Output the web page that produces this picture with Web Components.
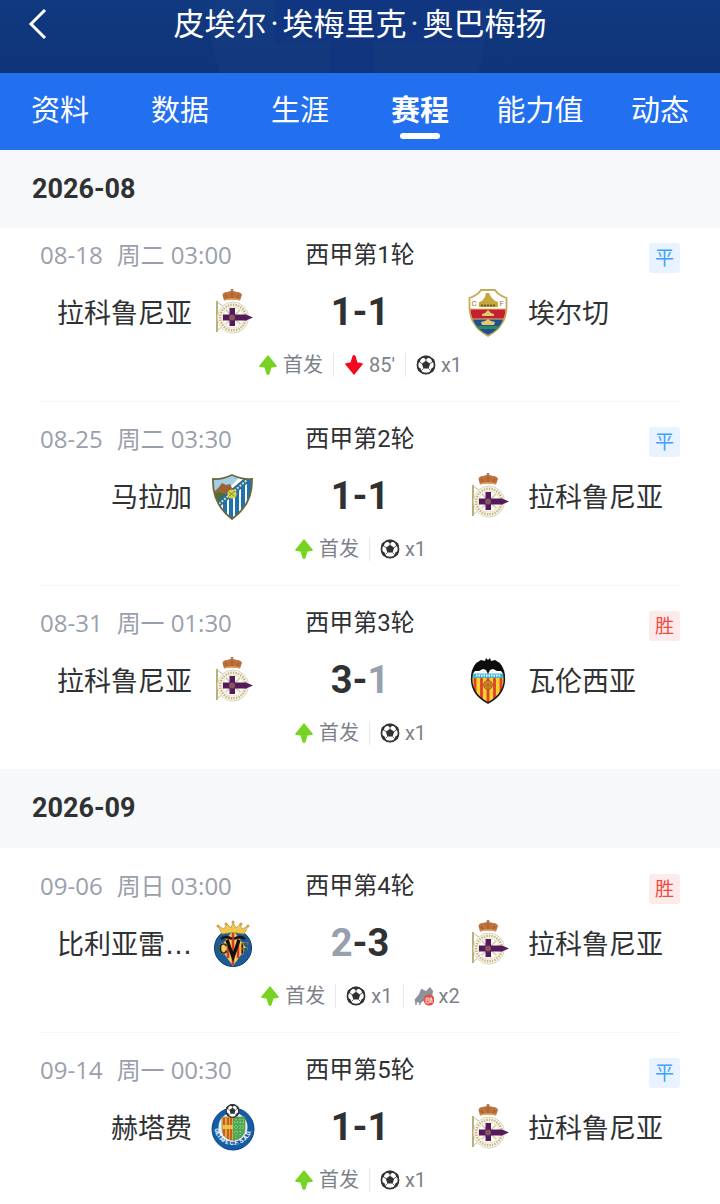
<!DOCTYPE html>
<html lang="zh-CN">
<head>
<meta charset="utf-8">
<meta name="viewport" content="width=device-width, initial-scale=1">
<title>赛程</title>
<style>
  body {
    margin: 0;
    background: #fff;
    color: #303133;
    font-family: Roboto, "Noto Sans CJK SC", sans-serif;
  }
</style>
</head>
<body>
<player-page>
  <player-header slot="header">皮埃尔<span>·</span>埃梅里克<span>·</span>奥巴梅扬</player-header>
  <tab-bar slot="tabs">
    <tab-link>资料</tab-link>
    <tab-link>数据</tab-link>
    <tab-link>生涯</tab-link>
    <tab-link active>赛程</tab-link>
    <tab-link>能力值</tab-link>
    <tab-link>动态</tab-link>
  </tab-bar>
  <month-group class="first">
    <span slot="month">2026-08</span>
    <match-row when="08-18 周二 03:00" round="西甲第1轮" result="平" home="拉科鲁尼亚" home-crest="deportivo" away="埃尔切" away-crest="elche" score="1-1" events="on:首发|off:85'|goal:x1"></match-row>
    <match-row when="08-25 周二 03:30" round="西甲第2轮" result="平" home="马拉加" home-crest="malaga" away="拉科鲁尼亚" away-crest="deportivo" score="1-1" events="on:首发|goal:x1"></match-row>
    <match-row when="08-31 周一 01:30" round="西甲第3轮" result="胜" home="拉科鲁尼亚" home-crest="deportivo" away="瓦伦西亚" away-crest="valencia" score="3-1" events="on:首发|goal:x1"></match-row>
  </month-group>
  <month-group class="last">
    <span slot="month">2026-09</span>
    <match-row when="09-06 周日 03:00" round="西甲第4轮" result="胜" home="比利亚雷…" home-crest="villarreal" away="拉科鲁尼亚" away-crest="deportivo" score="2-3" events="on:首发|goal:x1|assist:x2"></match-row>
    <match-row when="09-14 周一 00:30" round="西甲第5轮" result="平" home="赫塔费" home-crest="getafe" away="拉科鲁尼亚" away-crest="deportivo" score="1-1" events="on:首发|goal:x1"></match-row>
  </month-group>
</player-page>

<script>
const ball = (cx, cy, r) => `
  <g transform="translate(${cx} ${cy}) scale(${r / 10})">
    <circle r="9" fill="#fff" stroke="#303133" stroke-width="1.8"/>
    <path fill="#303133" d="M0-4.600 4.400-1.400 2.700 3.800H-2.700L-4.400-1.400Z M-4.500-8.600 0-6 4.500-8.600 2-9.800H-2Z M9.600-1.500 6.400-3.200 5.400-7.600 8.500-6Z M9.400 2 6 3.200 4 8.200 7.800 6.600Z M-9.400 2-6 3.200-4 8.200-7.800 6.600Z M-9.600-1.500-6.400-3.200-5.400-7.600-8.500-6Z"/>
    <path stroke="#303133" stroke-width=".8" fill="none" d="M0-4.400V-7M4.200-1.400 7-3.400M2.600 3.600 5 6M-2.600 3.600-5 6M-4.200-1.400-7-3.400"/>
  </g>`;

const CRESTS = {
  deportivo: `
    <path d="M6 14v31" stroke="#a99a62" stroke-width="1.600"/>
    <path d="M6 15 13 20M6 44 13 38" stroke="#c9bd8d" stroke-width="1"/>
    <circle cx="22" cy="30.500" r="15.500" fill="#fbf9ee" stroke="#ddd5b2" stroke-width="1"/>
    <circle cx="22" cy="30.500" r="12.800" fill="none" stroke="#bfb384" stroke-width="2.400" stroke-dasharray="1.400 1.200"/>
    <circle cx="22" cy="30.500" r="10.500" fill="#fffef8" stroke="#ddd5b2" stroke-width=".7"/>
    <path d="m15 23 14 14M29 23 15 37" stroke="#d3cbad" stroke-width="1.600"/>
    <path fill="#561a5c" d="M18.500 21h5.500v6.500H35l7 3-7 3H24V39h-5.500v-5.500H12v-6h6.500Z"/>
    <circle cx="21" cy="30.500" r="3" fill="#855361"/>
    <path fill="#be713a" d="M13 13.500 11.500 8Q12 5 16 5L21 3.800 26 5q4 0 5 3l-2 5.500Q21 11.500 13 13.500Z"/>
    <path d="M21 2v3M19.500 3h3M14 8l2 3M21 6v5M28 8l-2 3" stroke="#9a5a2b" stroke-width="1"/>
    <path d="M13.500 12.800q7.500-2 15 0" stroke="#dda36a" stroke-width="1.200" fill="none"/>`,
  elche: `
    <path d="M14 3h14q3 5 11.500 8V21Q39 39 21 49 3 39 2.500 21V11Q11 8 14 3Z" fill="#fff" stroke="#c8aa59" stroke-width="1.800"/>
    <path d="M3.500 22h35q0 5-2 10h-31q-2-5-2-10Z" fill="#c51f32"/>
    <path d="M5.500 32h31Q32 43 21 48 10 43 5.500 32Z" fill="#1f4f8c"/>
    <path d="M9 39h24l-3 3H12Z" fill="#2d8664"/>
    <path d="M3 22h36M5 32h32" stroke="#d9bb65" stroke-width="1"/>
    <path d="M12 20v-5l3-1 3-4 1-4h3l2 4 4 4 3 1v5Z" fill="#c7a63b"/>
    <path d="M14 18.500h15" stroke="#695b20" stroke-width="2" stroke-dasharray="2 1"/>
    <path d="M15 29h12v-2l-3-1-3-3-3 3-3 1ZM15 38h12l1-3-4-1-3-2-3 2-4 1Z" fill="#e5c96d"/>
    <text x="4.500" y="19" font-size="8" fill="#8f7d47">C</text><text x="32.500" y="19" font-size="8" fill="#8f7d47">F</text>`,
  malaga: `
    <clipPath id="mc"><path d="M2 8Q10 9 21 4q11 5 20 4 1 25-20 40Q1 33 2 8Z"/></clipPath>
    <g clip-path="url(#mc)">
      <path fill="#fff" d="M0 0h42v50H0z"/>
      <path fill="#a3d0e8" d="M0 0h34L3 34Z"/>
      <path fill="#9b6234" d="M3 21 8 16l3-4 4 2 4-1 2 4 5 1-17 14Z"/>
      <path fill="#4c6f35" d="M3 23q6-4 12 1L7 33Z"/>
      <path d="M14 27v20M20 22v28M26 18v32M32 13v30M38 9v30" stroke="#1d72b0" stroke-width="4"/>
      <path d="M5 35 37 8" stroke="#2a6c9c" stroke-width="6"/>
      <path d="M8 33 36 9" stroke="#d5e3b0" stroke-width="2" stroke-dasharray="2 1.400"/>
    </g>
    <circle cx="21" cy="23" r="4.600" fill="#ddd23e"/><path d="m18 25 6-5m-6 1 5 4" stroke="#6d943e"/>
    <path d="M2 8Q10 9 21 4q11 5 20 4 1 25-20 40Q1 33 2 8Z" fill="none" stroke="#6d673e" stroke-width="1.800"/>`,
  valencia: `
    <clipPath id="vc"><path d="M5 19Q12 16 21 17q9-1 16 2Q40 38 21 48 2 38 5 19Z"/></clipPath>
    <g clip-path="url(#vc)">
      <path fill="#f8d030" d="M0 15h42v35H0z"/>
      <path d="M8 22v26M14.500 22v28M21 22v28M27.500 22v28M34 22v26" stroke="#df412c" stroke-width="2.800"/>
      <path fill="#47b4d4" d="M0 15h42v8H0z"/>
    </g>
    <path d="M9 20.500h24" stroke="#e8f8fa" stroke-width="2" stroke-dasharray="1.500 1"/>
    <circle cx="21" cy="30" r="4.500" fill="#d78424" stroke="#985a1b" stroke-width=".8"/><path d="m17 28 8 4m-8 0 8-4M21 26v8" stroke="#a76520" stroke-width=".7"/>
    <path d="M5 19Q2 38 21 48 40 38 37 19" fill="none" stroke="#171717" stroke-width="1.500"/>
    <path d="M7 17.500h28" stroke="#fff" stroke-width="2"/>
    <path fill="#0c0c0c" d="M4 21Q5 9 14 5l4 1 1-3 2 2 2-2 1 3 4-1q9 4 10 16l-4-5-4 0-4-2-3 1-2 4-2-4-3-1-4 2-4 0Z"/>`,
  villarreal: `
    <circle cx="22" cy="30" r="18.600" fill="#1d5a96" stroke="#16436f" stroke-width="1"/>
    <path d="M22 12 35 30 22 48 9 30Z" fill="#f4cf55"/>
    <path d="M17 20v20M22 14v33M27 20v20" stroke="#d3392f" stroke-width="2.600"/>
    <path fill="#f0c94e" stroke="#b8923c" stroke-width=".7" d="M11 16 7 8l6 3 3-5 4 4 2-6 3 6 4-4 2 5 6-3-4 8q-11-3-22 0Z"/>
    <g fill="#dd9a45"><circle cx="7" cy="8" r="1.500"/><circle cx="15" cy="6" r="1.500"/><circle cx="22" cy="4" r="1.500"/><circle cx="30" cy="6" r="1.500"/><circle cx="37" cy="8" r="1.500"/></g>
    <path d="M10 21q5-4 11 0M23 21q6-4 11 0" stroke="#151515" stroke-width="2.400" fill="none"/>
    <path d="M16 22 22 39 28 22" stroke="#111" stroke-width="3.400" fill="none"/>
    <g font-weight="700" fill="#111" stroke="#f1cf5c" stroke-width=".3" text-anchor="middle" font-size="14"><text x="12" y="36">C</text><text x="33" y="36">F</text></g>`,
  getafe: `
    <circle cx="22" cy="27" r="21" fill="#145ba8" stroke="#0e4786" stroke-width="1"/>
    <circle cx="22" cy="25" r="14.500" fill="#e7f1f5"/>
    <path d="M11 15h11v24q-11-3-11-12Z" fill="#d9ac2a"/><path d="M13 16v18M17 16v21M20 16v22" stroke="#cf4830" stroke-width="1.700"/>
    <path d="M11 23h11v4H11Z" fill="#e4c44f"/>
    <path d="M22 15h12v12q0 9-12 12Z" fill="#4ba956"/><path d="M25 17v19M29 17v16M32 17v12M23 20h10M23 25h10M23 30h9" stroke="#a5d898" stroke-width="1" stroke-dasharray="1 2"/>
    <path d="M11 15h23v12q0 9-12 12-11-3-11-12Z" fill="none" stroke="#8d843c" stroke-width=".7"/>
    <path id="ga" d="M3 24a19 19 0 0 0 38 0" fill="none"/>
    <text font-size="6" font-weight="700" fill="#fff"><textPath href="#ga" startOffset="3">GETAFE C.F. S.A.D.</textPath></text>
    ${ball(21.5, 9, 7)}`
};

const ICONS = {
  on: `<path fill="#77d321" d="M10 0 19 11Q19 12 13.500 12.500L11.500 19Q10 21 8.500 19L6.500 12.500Q1 12 1 11Z"/>`,
  off: `<path fill="#f5071d" d="M10 20 19 9Q19 8 13.500 7.500L11.500 1Q10-1 8.500 1L6.500 7.500Q1 8 1 9Z"/>`,
  goal: ball(10, 10, 9.5),
  assist: `
    <path fill="#8b929e" d="M8 3 12 5l4-4 3 4-1 7-5 2-4 1-2 2-6-1q-1-3 1-4 4-4 5-9Z"/>
    <path stroke="#8b929e" stroke-width="1.500" d="M2 16v3M6 16v3"/>
    <circle cx="15" cy="14" r="5.500" fill="#e84b40"/>
    <path d="M12 12h3v5h-3ZM12 14h3M16 13h2v4M17 11v3l-1 3" fill="none" stroke="#fff" stroke-width=".8"/>`
};

function define(name, css, html, setup) {
  const template = document.createElement('template');
  template.innerHTML = `<style>*{box-sizing:border-box}${css}</style>${html}`;
  customElements.define(name, class extends HTMLElement {
    constructor() {
      super();
      this.attachShadow({ mode: 'open' }).append(template.content.cloneNode(true));
    }
    connectedCallback() {
      if (setup) setup(this, this.shadowRoot);
    }
  });
}

define('club-crest',
  `:host{display:block;width:42px;height:50px;flex:none}
   svg{display:block;width:100%;height:100%;overflow:visible}`,
  `<svg viewBox="0 0 42 50" fill="none" aria-hidden="true"></svg>`,
  (el, root) => { root.querySelector('svg').innerHTML = CRESTS[el.getAttribute('club')] || ''; });

define('match-event',
  `:host{display:flex;align-items:center;gap:5px;height:24px;font-size:20px;line-height:24px;color:#7d818a}
   svg{width:20px;height:20px;flex:none}`,
  `<svg viewBox="0 0 20 20" aria-hidden="true"></svg><span><slot></slot></span>`,
  (el, root) => { root.querySelector('svg').innerHTML = ICONS[el.getAttribute('kind')]; });

define('result-tag',
  `:host{display:block;width:31px;height:30px;border-radius:3px;font-size:19px;line-height:32px;text-align:center;color:#409eff;background:#e8f3ff}
   :host([win]){color:#f04a40;background:#fdeaea}`,
  `<slot></slot>`);

define('match-row',
  `:host{display:block;padding:0 40px}
   article{padding:var(--row-start,26px) 0 var(--row-end,24px);background:linear-gradient(#f5f6f7,#f5f6f7) top/100% var(--rule,1px) no-repeat}
   .info,.teams{display:grid;grid-template-columns:1fr 214px 1fr}
   .info{height:30px;font-size:24px;line-height:24px}
   time{display:flex;gap:6px;color:#9a9fac;font-family:"Open Sans","Noto Sans CJK SC",sans-serif;white-space:nowrap}
   time :first-child{margin-right:8px}
   .round{text-align:center}
   result-tag{justify-self:end}
   .teams{align-items:center;height:50px;margin-top:14px}
   .team{display:flex;align-items:center;gap:19px;font-size:27px;line-height:36px;white-space:nowrap}
   .team span{padding-top:3px}
   .team b{font-family:"DejaVu Sans",sans-serif;font-weight:400;line-height:1}
   .home{justify-content:flex-end}
   .score{text-align:center;font-size:38px;font-weight:700;line-height:50px}
   .lost{color:#989fad}
   .events{display:flex;justify-content:center;gap:10px;margin-top:16px;height:24px}
   i{width:1px;background:#e8e9eb}`,
  `<article>
     <div class="info"><time></time><div class="round"></div><result-tag></result-tag></div>
     <div class="teams">
       <div class="team home"><span></span></div>
       <div class="score"></div>
       <div class="team away"><span></span></div>
     </div>
     <div class="events"></div>
   </article>`,
  (el, root) => {
    const $ = s => root.querySelector(s), at = n => el.getAttribute(n);
    $('time').innerHTML = at('when').split(' ').map(part => `<span>${part}</span>`).join(' ');
    $('.round').textContent = at('round');
    $('result-tag').textContent = at('result');
    $('result-tag').toggleAttribute('win', at('result') === '胜');
    for (const side of ['home', 'away']) {
      $(`.${side} span`).innerHTML = at(side).replace('…', '<b>…</b>');
      const crest = document.createElement('club-crest');
      crest.setAttribute('club', at(`${side}-crest`));
      $(`.${side}`)[side === 'home' ? 'append' : 'prepend'](crest);
    }
    const [h, a] = at('score').split('-').map(Number);
    $('.score').innerHTML = `<span class="${h < a ? 'lost' : ''}">${h}</span>-<span class="${a < h ? 'lost' : ''}">${a}</span>`;
    $('.events').innerHTML = at('events').split('|').map(e => {
      const [kind, label] = e.split(':');
      return `<match-event kind="${kind}">${label}</match-event>`;
    }).join('<i></i>');
  });

define('month-group',
  `:host{display:block}
   h2{margin:0;padding:0 32px;height:79px;line-height:79px;font-size:27px;font-weight:700;background:#f7f8fa}
   :host(.first) h2{height:78px;line-height:78px}
   ::slotted(match-row:first-of-type){--rule:0px}
   :host(.first) ::slotted(match-row:first-of-type){--row-start:15px}
   :host(.last) ::slotted(match-row:last-of-type){--row-end:12px}`,
  `<section><h2><slot name="month"></slot></h2><slot></slot></section>`);

define('tab-link',
  `:host{display:block;flex:1}
   a{display:flex;flex-direction:column;align-items:center;height:77px;padding-top:18px;color:#fff;font-size:29px;line-height:40px;text-decoration:none;white-space:nowrap}
   :host([active]) a{font-weight:700}
   :host([active]) a::after{content:"";width:40px;height:6px;margin-top:2px;border-radius:3px;background:#fff}`,
  `<a href="#"><slot></slot></a>`,
  (el, root) => { if (el.hasAttribute('active')) root.querySelector('a').setAttribute('aria-current', 'page'); });

define('tab-bar',
  `:host{display:block;background:#226ff0}nav{display:flex}`,
  `<nav><slot></slot></nav>`);

define('player-header',
  `:host{display:block;height:73px;color:#fff;background:linear-gradient(#10397f,#103479)}
   header{display:grid;grid-template-columns:76px 1fr 76px;height:73px;position:relative}
   .mark{position:absolute;left:50%;top:0;width:300px;height:73px;margin-left:-160px}
   button{display:flex;align-items:center;height:48px;padding:0 0 0 28px;border:0;background:none;color:inherit;position:relative}
   h1{margin:0;font-size:31px;font-weight:400;line-height:50px;text-align:center;white-space:nowrap;position:relative}
   ::slotted(span){padding:0 4px}`,
  `<header>
     <svg class="mark" viewBox="0 0 300 73" aria-hidden="true"><path fill="#1a428b" opacity=".25" d="M8 0h280q0 40-10 73H20Q8 40 8 0Z"/><path fill="#0e3080" opacity=".4" d="M75 0h100v43H75ZM130 43h44v30h-44ZM175 0h105v43H175Z"/></svg>
     <button type="button" aria-label="返回"><svg width="20" height="32" viewBox="0 0 20 32" fill="none" stroke="#fff" stroke-width="3"><path d="M17 2 3 16l14 14"/></svg></button>
     <h1><slot></slot></h1>
   </header>`);

define('player-page',
  `:host{display:block}`,
  `<slot name="header"></slot><slot name="tabs"></slot><main><slot></slot></main>`);
</script>
</body>
</html>
